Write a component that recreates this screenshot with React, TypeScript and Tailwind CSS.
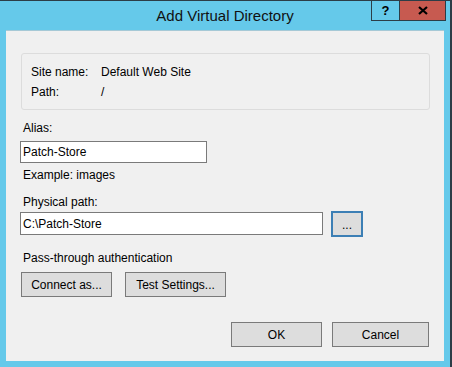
const font = { fontFamily: '"Liberation Sans", Arial, sans-serif' };

function WinButton({ label, className }: { label: string; className: string }) {
  return (
    <button
      className={`h-[25px] shrink-0 border border-[#7a7a7a] bg-[#dddddd] text-[12px] leading-none text-black ${className}`}
    >
      {label}
    </button>
  );
}

export default function App() {
  return (
    <div
      className="flex h-[367px] w-[452px] flex-col border-t border-r-2 border-[#2c3d47] bg-[#65c9ea]"
      style={font}
    >
      {/* title bar */}
      <div className="grid h-[29px] shrink-0 grid-cols-[1fr_auto_1fr]">
        <div />
        <div className="flex items-center pt-px text-[15px] text-[#111]">
          Add Virtual Directory
        </div>
        <div className="flex items-start justify-end pr-[4px]">
          <div className="flex h-[20px] w-[28px] items-center justify-center border-b border-l border-[#2c3d47] text-[13px] font-bold text-black">
            ?
          </div>
          <div className="flex h-[20px] w-[47px] items-center justify-center border-x border-b border-[#2c3d47] bg-[#c75a50]">
            <svg width="10" height="9" viewBox="0 0 10 9">
              <path d="M1 1 L9 8 M9 1 L1 8" stroke="#000" strokeWidth="2.2" />
            </svg>
          </div>
        </div>
      </div>

      {/* client area */}
      <div className="ml-[6px] flex h-[331px] w-[438px] flex-col border-t border-[#a6c9d6] bg-[#f0f0f0] text-[12px] text-black">
        <div className="mt-[22px] ml-[15px] w-[409px] rounded-[3px] border border-[#dcdcdc] pt-2 pb-[7px] pl-[9px]">
          <div className="flex h-5 items-center">
            <span className="w-[70px]">Site name:</span>
            <span>Default Web Site</span>
          </div>
          <div className="flex h-5 items-center">
            <span className="w-[70px]">Path:</span>
            <span>/</span>
          </div>
        </div>

        <div className="mt-[10px] h-4 pl-[17px] leading-4">Alias:</div>
        <div className="mt-[5px] ml-[14px] flex h-[22px] w-[187px] items-center border border-[#7a7a7a] bg-white pl-[2px]">
          Patch-Store
        </div>
        <div className="mt-[4px] h-4 pl-[17px] leading-4">Example: images</div>

        <div className="mt-[11px] h-4 pl-[17px] leading-4">Physical path:</div>
        <div className="mt-px ml-[14px] flex items-start">
          <div className="mt-px flex h-[23px] w-[303px] items-center border border-[#7a7a7a] bg-white pl-[2px]">
            C:\Patch-Store
          </div>
          <button className="ml-[8px] flex h-[26px] w-[32px] items-center justify-center border-2 border-[#3c7fb5] bg-[#dddddd] pt-[2px] text-[12px] leading-none">
            ...
          </button>
        </div>

        <div className="mt-[13px] h-4 pl-[17px] leading-4">Pass-through authentication</div>
        <div className="mt-[6px] ml-[15px] flex gap-[13px]">
          <WinButton label="Connect as..." className="w-[91px]" />
          <WinButton label="Test Settings..." className="w-[101px]" />
        </div>

        <div className="mt-[25px] flex justify-end gap-[10px] pr-[15px]">
          <WinButton label="OK" className="w-[91px]" />
          <WinButton label="Cancel" className="w-[97px]" />
        </div>
      </div>
    </div>
  );
}
